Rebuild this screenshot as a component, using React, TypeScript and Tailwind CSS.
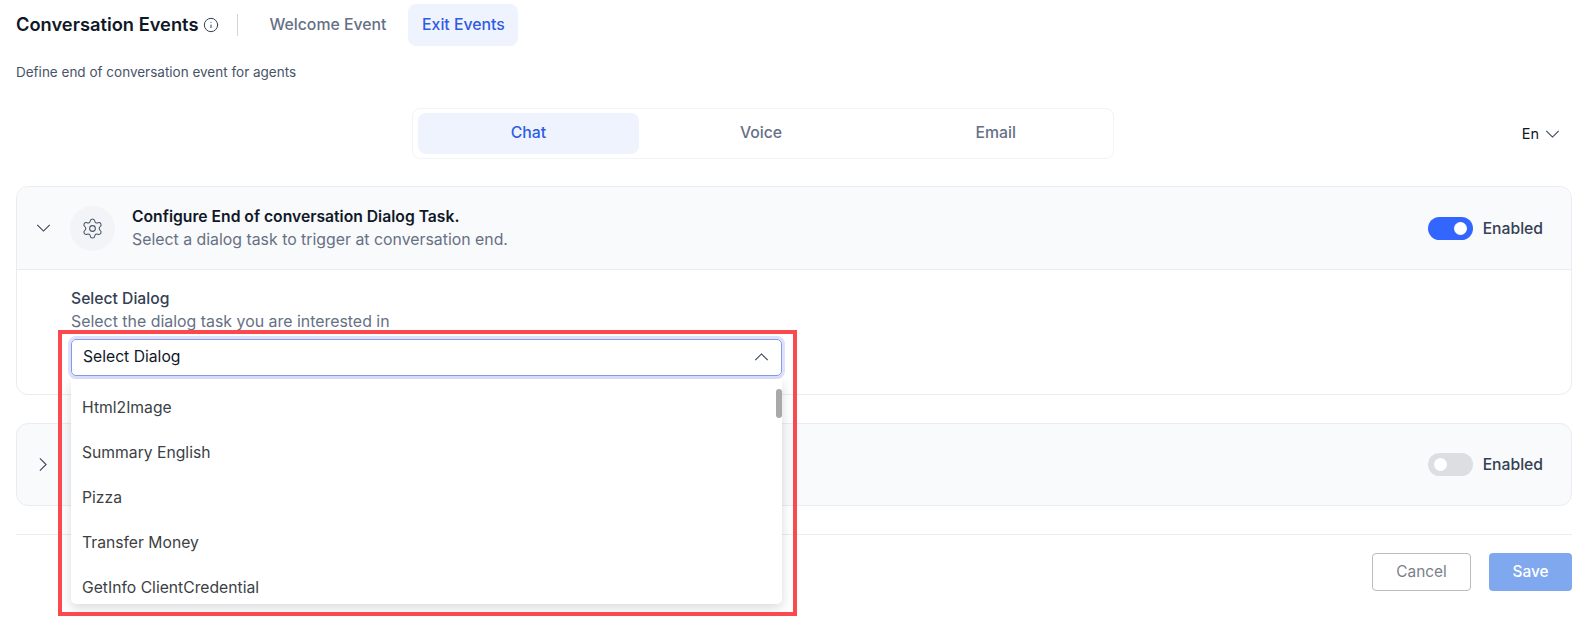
import { Info, Settings } from "lucide-react";

const dialogs = ["Html2Image", "Summary English", "Pizza", "Transfer Money", "GetInfo ClientCredential"];

function Chevron({ dir, className }: { dir: "up" | "down" | "right"; className?: string }) {
  if (dir === "right") {
    return (
      <svg viewBox="0 0 9 16" className={`h-[15px] w-[8px] ${className}`} fill="none" stroke="currentColor" strokeWidth="1.2">
        <path d="M1 1l7 7-7 7" />
      </svg>
    );
  }
  return (
    <svg viewBox="0 0 16 9" className={`h-[8px] w-[15px] ${className}`} fill="none" stroke="currentColor" strokeWidth="1.2">
      <path d={dir === "down" ? "M1 1l7 7 7-7" : "M1 8l7-7 7 7"} />
    </svg>
  );
}

function Toggle({ on }: { on: boolean }) {
  return (
    <div className={`flex h-[23px] w-[45px] items-center rounded-full px-[6px] ${on ? "justify-end bg-[#3366ff]" : "justify-start bg-[#dcdfe2]"}`}>
      <div className="h-[13px] w-[13px] rounded-full bg-white" />
    </div>
  );
}

export default function App() {
  return (
    <div className="relative h-[639px] w-[1596px] overflow-hidden bg-white pl-4 pr-6 pt-1 font-['Inter',sans-serif]">
      <div className="flex h-[42px] items-center">
        <h1 className="text-[18.3px] font-semibold text-[#101828]">Conversation Events</h1>
        <Info className="ml-[5px] h-[16px] w-[16px] text-[#344054]" strokeWidth={1.5} />
        <div className="ml-[18px] h-[22px] w-px bg-[#d0d5dd]" />
        <div className="ml-[31px] w-[139px] text-[15.8px] font-medium text-[#667085]">Welcome Event</div>
        <div className="flex h-[42px] w-[110px] items-center justify-center rounded-lg bg-[#eff3fd] text-[15.8px] font-medium text-[#2e5ce5]">Exit Events</div>
      </div>
      <p className="mt-[17px] text-[13.5px] leading-[18px] text-[#475467]">Define end of conversation event for agents</p>

      <div className="mt-[27px] flex items-center">
        <div className="ml-[396px] flex h-[51px] w-[702px] items-center rounded-lg border border-[#f2f4f7] px-[5px] text-[15.8px] font-medium text-[#667085]">
          <div className="flex h-[41px] w-[222px] items-center justify-center rounded-lg bg-[#eff3fd] pb-[1px] text-[#2e5ce5]">Chat</div>
          <div className="flex h-[41px] w-[246px] items-center justify-center pb-[1px]">Voice</div>
          <div className="flex h-[41px] w-[226px] items-center justify-center pb-[1px]">Email</div>
        </div>
        <div className="ml-auto mr-[12px] flex items-center gap-[6px] text-[14.5px] text-[#101828]">
          En
          <Chevron dir="down" className="text-[#344054]" />
        </div>
      </div>

      <section className="mt-[27px] h-[209px] rounded-xl border border-[#eaecf0]">
        <div className="flex h-[83px] items-center rounded-t-xl border-b border-[#eaecf0] bg-[#f9fafb] pl-[19px] pr-[28px]">
          <Chevron dir="down" className="text-[#344054]" />
          <div className="ml-[19px] flex h-[45px] w-[45px] items-center justify-center rounded-full bg-[#f2f4f7]">
            <Settings className="h-[23px] w-[23px] text-[#475467]" strokeWidth={1.1} />
          </div>
          <div className="ml-[17px] flex-1">
            <div className="text-[15.7px] font-semibold leading-[23px] text-[#101828]">Configure End of conversation Dialog Task.</div>
            <div className="text-[15.85px] leading-[23px] text-[#667085]">Select a dialog task to trigger at conversation end.</div>
          </div>
          <div className="mt-[2px] flex items-center gap-[10px]">
            <Toggle on />
            <span className="text-[15.7px] font-medium text-[#344054]">Enabled</span>
          </div>
        </div>
        <div className="pl-[54px] pt-[17px]">
          <div className="text-[15.7px] font-medium leading-[23px] text-[#344054]">Select Dialog</div>
          <div className="text-[15.9px] leading-[23px] text-[#667085]">Select the dialog task you are interested in</div>
          <div className="mt-[6px] flex h-[37px] w-[711px] items-center justify-between rounded-[5px] border border-[#7f9ee8] pb-[1px] pl-[11px] pr-[12px] text-[15.7px] text-[#101828] shadow-[0_0_0_3px_#dfe0fb]">
            Select Dialog
            <Chevron dir="up" className="text-[#344054]" />
          </div>
        </div>
      </section>

      <section className="mt-[28px] flex h-[83px] items-center rounded-xl border border-[#eaecf0] bg-[#f9fafb] pl-[22px] pr-[28px]">
        <Chevron dir="right" className="text-[#344054]" />
        <div className="flex-1" />
        <Toggle on={false} />
        <span className="ml-[10px] text-[15.7px] font-medium text-[#344054]">Enabled</span>
      </section>

      <div className="mt-[28px] border-t border-[#eaecf0] pt-[18px]">
        <div className="flex justify-end gap-[18px]">
          <button className="h-[38px] w-[99px] rounded border border-[#b9bcc0] text-[15.4px] text-[#7b8088]">Cancel</button>
          <button className="h-[38px] w-[83px] rounded bg-[#7fa8ee] text-[15.4px] font-medium text-white">Save</button>
        </div>
      </div>

      {/* open dropdown sits over the cards */}
      <div className="absolute left-[71px] top-[379px] h-[225px] w-[711px] overflow-hidden rounded-b-[5px] bg-white pt-[6px] shadow-[0_4px_12px_rgba(16,24,40,0.16)]">
        {dialogs.map((d) => (
          <div key={d} className="flex h-[45px] items-center pl-[11px] text-[15.7px] text-[#3b3f46]">{d}</div>
        ))}
        <div className="absolute right-0 top-[10px] h-[29px] w-[6px] rounded-full bg-[#a9a9a9]" />
      </div>
      {/* red annotation box */}
      <div className="pointer-events-none absolute left-[58px] top-[330px] h-[286px] w-[739px] border-4 border-[#fa4a4f]" />
    </div>
  );
}
